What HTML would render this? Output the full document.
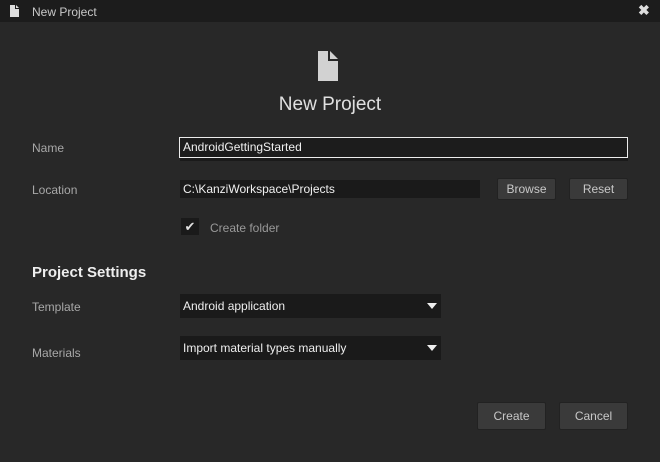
<!DOCTYPE html>
<html><head><style>
*{margin:0;padding:0;box-sizing:border-box}
body{width:660px;height:462px;background:#282828;font-family:"Liberation Sans",sans-serif;font-size:12px;color:#ddd;position:relative;overflow:hidden}
.a{position:absolute}
.lbl{color:#a8a8a8;font-size:12px}
.btn{position:absolute;background:#3a3a3a;border:1px solid #222;border-radius:2px;color:#c8c8c8;text-align:center;font-size:12px}
.dd{position:absolute;background:#1a1a1a;color:#eee;padding-left:3px;font-size:12px}
.tri{position:absolute;right:4px;width:0;height:0;border-left:5px solid transparent;border-right:5px solid transparent;border-top:6px solid #eee}
</style></head><body>
<div class="a" style="left:0;top:0;width:660px;height:22px;background:#1c1c1c"></div>
<svg class="a" style="left:10px;top:5px" width="10" height="12"><path d="M0 0H5V4H9V12H0Z" fill="#ddd"/><path d="M6 0L9 3H6Z" fill="#ddd"/></svg>
<div class="a" style="left:32px;top:5px;color:#c8c8c8;font-size:12px">New Project</div>
<div class="a" style="left:638px;top:2px;color:#ddd;font-size:14px;font-weight:bold">✖</div>
<svg class="a" style="left:318px;top:51px" width="24" height="30"><path d="M0 0H10V10H20V30H0Z" fill="#d2d2d2"/><path d="M12 0L20 8H12Z" fill="#d2d2d2"/></svg>
<div class="a" style="left:0;width:660px;top:94px;text-align:center;font-size:19px;color:#e0e0e0">New Project</div>
<div class="a lbl" style="left:32px;top:141px">Name</div>
<div class="a" style="left:179px;top:137px;width:449px;height:21px;border:1px solid #ececec;background:#1c1c1c;padding:2px 3px;color:#f0f0f0">AndroidGettingStarted</div>
<div class="a" style="left:180px;top:158px;width:448px;height:3px;background:#1a1a1a"></div>
<div class="a lbl" style="left:32px;top:183px">Location</div>
<div class="a" style="left:180px;top:180px;width:300px;height:18px;background:#1a1a1a;padding:2px 3px;color:#f0f0f0">C:\KanziWorkspace\Projects</div>
<div class="btn" style="left:497px;top:178px;width:59px;height:22px;line-height:20px">Browse</div>
<div class="btn" style="left:569px;top:178px;width:59px;height:22px;line-height:20px">Reset</div>
<div class="a" style="left:181px;top:218px;width:18px;height:17px;background:#1a1a1a;color:#e0e0e0;text-align:center;line-height:17px;font-size:13px">✔</div>
<div class="a" style="left:210px;top:221px;color:#999">Create folder</div>
<div class="a" style="left:32px;top:264px;font-size:15px;font-weight:bold;color:#eee">Project Settings</div>
<div class="a lbl" style="left:32px;top:300px">Template</div>
<div class="dd" style="left:180px;top:294px;width:261px;height:24px;line-height:24px">Android application<div class="tri" style="top:9px"></div></div>
<div class="a lbl" style="left:32px;top:346px">Materials</div>
<div class="dd" style="left:180px;top:336px;width:261px;height:24px;line-height:24px">Import material types manually<div class="tri" style="top:9px"></div></div>
<div class="btn" style="left:477px;top:402px;width:69px;height:28px;line-height:26px">Create</div>
<div class="btn" style="left:559px;top:402px;width:69px;height:28px;line-height:26px">Cancel</div>
</body></html>
